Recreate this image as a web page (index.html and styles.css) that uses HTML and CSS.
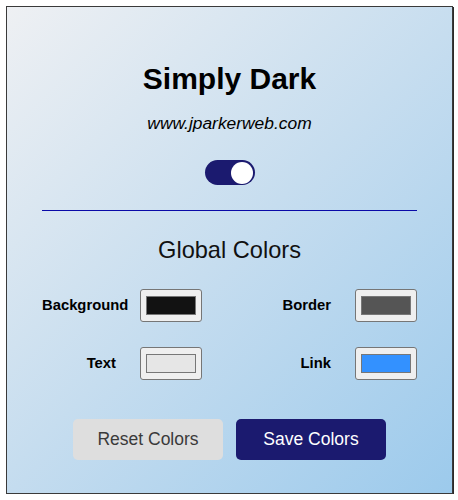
FILE: index.html
```html
<!DOCTYPE html>
<html lang="en">
<head>
<meta charset="utf-8">
<title>Simply Dark</title>
<link rel="stylesheet" href="styles.css">
</head>
<body>
<main class="panel">
  <h1 class="title">Simply Dark</h1>
  <p class="site">www.jparkerweb.com</p>
  <div class="toggle-row">
    <div class="toggle"><span class="knob"></span></div>
  </div>
  <hr class="divider">
  <h2 class="section-title">Global Colors</h2>
  <div class="color-grid">
    <div class="color-item">
      <span class="color-label">Background</span>
      <div class="color-btn"><span class="swatch swatch-bg"></span></div>
    </div>
    <div class="color-item">
      <span class="color-label">Border</span>
      <div class="color-btn"><span class="swatch swatch-border"></span></div>
    </div>
    <div class="color-item">
      <span class="color-label">Text</span>
      <div class="color-btn"><span class="swatch swatch-text"></span></div>
    </div>
    <div class="color-item">
      <span class="color-label">Link</span>
      <div class="color-btn"><span class="swatch swatch-link"></span></div>
    </div>
  </div>
  <div class="actions">
    <button class="btn btn-reset">Reset Colors</button>
    <button class="btn btn-save">Save Colors</button>
  </div>
</main>
</body>
</html>
```

FILE: styles.css
```css
html, body {
  margin: 0;
  padding: 0;
  background: #ffffff;
}

body {
  font-family: "Liberation Sans", Arial, sans-serif;
  color: #000;
}

.panel {
  box-sizing: border-box;
  margin: 6px 0 0 6px;
  width: 447px;
  height: 488px;
  border: 1px solid #3a3a3a;
  box-shadow: 1px 1px 0 #2a2a2a;
  padding: 55px 35px 0 35px;
  background: linear-gradient(135deg, #eef0f3 0%, #c6ddef 50%, #9ccaec 100%);
  display: flex;
  flex-direction: column;
  align-items: stretch;
}

.title {
  margin: 0;
  font-size: 30px;
  line-height: 34px;
  font-weight: bold;
  text-align: center;
  color: #000;
}

.site {
  margin: 17px 0 0 0;
  font-size: 17.4px;
  line-height: 20px;
  font-style: italic;
  text-align: center;
  color: #000;
}

.toggle-row {
  display: flex;
  justify-content: center;
  margin-top: 27px;
}

.toggle {
  position: relative;
  width: 50px;
  height: 25px;
  border-radius: 13px;
  background: #1b1a6f;
}

.knob {
  position: absolute;
  top: 1.5px;
  right: 2px;
  width: 22px;
  height: 22px;
  border-radius: 50%;
  background: #ffffff;
}

.divider {
  margin: 25px 0 0 0;
  border: 0;
  height: 1px;
  background: #0a0aa8;
}

.section-title {
  margin: 25px 0 0 0;
  font-size: 23.6px;
  line-height: 28px;
  font-weight: normal;
  text-align: center;
  color: #111;
}

.color-grid {
  margin-top: 25px;
  display: grid;
  grid-template-columns: 160px 160px;
  justify-content: space-between;
  row-gap: 25px;
}

.color-item {
  display: flex;
  align-items: center;
}

.color-label {
  width: 74px;
  margin-right: 24px;
  margin-top: -2px;
  text-align: right;
  font-size: 14.8px;
  font-weight: bold;
  white-space: nowrap;
  color: #000;
}

.color-btn {
  box-sizing: border-box;
  width: 62px;
  height: 33px;
  border: 1px solid #767676;
  border-radius: 3px;
  background: #efefef;
  padding: 6px 5px;
  display: flex;
}

.swatch {
  flex: 1;
  box-sizing: border-box;
  border: 1px solid #777;
}

.swatch-bg { background: #121212; }
.swatch-border { background: #555555; }
.swatch-text { background: #e6e6e6; }
.swatch-link { background: #3391ff; }

.actions {
  margin-top: 39px;
  display: flex;
  justify-content: center;
  gap: 13px;
}

.btn {
  width: 150px;
  height: 41px;
  border: 0;
  border-radius: 5px;
  font-family: "Liberation Sans", Arial, sans-serif;
  font-size: 17.5px;
  padding: 0;
}

.btn-reset {
  background: #dedede;
  color: #3a3a3a;
}

.btn-save {
  background: #1b1a6f;
  color: #ffffff;
}
```
